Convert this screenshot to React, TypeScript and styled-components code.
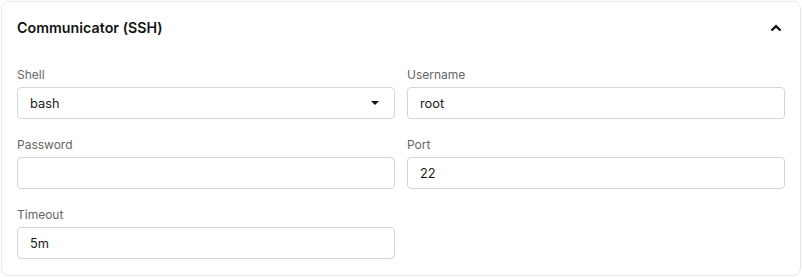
import React from "react";
import styled, { createGlobalStyle } from "styled-components";

const GlobalStyle = createGlobalStyle`
  html, body {
    margin: 0;
    padding: 0;
    background: #ffffff;
    font-family: Inter, "Noto Sans", sans-serif;
  }
  * { box-sizing: border-box; }
`;

const Page = styled.div`
  padding: 1px;
  width: 802px;
`;

const Card = styled.section`
  width: 800px;
  border: 1px solid #e9e9e9;
  border-radius: 8px;
  background: #ffffff;
  padding: 0 15px 16px;
`;

const Header = styled.div`
  height: 50px;
  display: flex;
  align-items: center;
  justify-content: space-between;
  padding-top: 1px;
`;

const Title = styled.h2`
  margin: 0;
  font-size: 14.2px;
  font-weight: 600;
  color: #111111;
  letter-spacing: 0.05px;
`;

const Toggle = styled.button`
  border: none;
  background: none;
  padding: 0;
  width: 16px;
  height: 16px;
  margin-right: 1px;
  display: flex;
  align-items: center;
  justify-content: center;
  cursor: pointer;
`;

const Grid = styled.div`
  display: grid;
  grid-template-columns: 1fr 1fr;
  column-gap: 12px;
  row-gap: 18px;
  padding-top: 15px;
`;

const Field = styled.label`
  display: flex;
  flex-direction: column;
  gap: 4px;
`;

const Label = styled.span`
  font-size: 12px;
  line-height: 16px;
  color: #666666;
`;

const InputBox = styled.div`
  position: relative;
  height: 32px;
  border: 1px solid #d6d6d6;
  border-radius: 4px;
  background: #ffffff;
  display: flex;
  align-items: center;
`;

const Input = styled.input`
  border: none;
  outline: none;
  background: transparent;
  width: 100%;
  height: 100%;
  padding: 0 12px;
  font-family: Inter, "Noto Sans", sans-serif;
  font-size: 12.8px;
  color: #1a1a1a;
`;

const Caret = styled.span`
  position: absolute;
  right: 15px;
  top: 50%;
  margin-top: -2px;
  width: 0;
  height: 0;
  border-left: 4px solid transparent;
  border-right: 4px solid transparent;
  border-top: 4px solid #111111;
  pointer-events: none;
`;

type FieldDef = { label: string; value: string; select?: boolean };

const fields: FieldDef[] = [
  { label: "Shell", value: "bash", select: true },
  { label: "Username", value: "root" },
  { label: "Password", value: "" },
  { label: "Port", value: "22" },
  { label: "Timeout", value: "5m" },
];

export default function App() {
  return (
    <Page>
      <GlobalStyle />
      <Card>
        <Header>
          <Title>Communicator (SSH)</Title>
          <Toggle aria-label="collapse">
            <svg width="12" height="8" viewBox="0 0 12 8">
              <polyline
                points="1.5,6.5 6,2.2 10.5,6.5"
                fill="none"
                stroke="#111"
                strokeWidth="2.4"
                strokeLinecap="butt"
                strokeLinejoin="miter"
              />
            </svg>
          </Toggle>
        </Header>
        <Grid>
          {fields.map((f) => (
            <Field key={f.label}>
              <Label>{f.label}</Label>
              <InputBox>
                <Input defaultValue={f.value} readOnly={f.select} />
                {f.select && <Caret />}
              </InputBox>
            </Field>
          ))}
        </Grid>
      </Card>
    </Page>
  );
}
